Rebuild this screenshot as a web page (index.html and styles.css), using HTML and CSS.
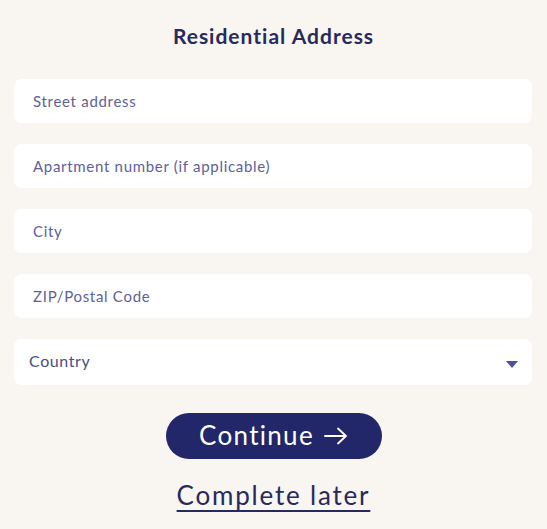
FILE: index.html
```html
<!DOCTYPE html>
<html lang="en">
<head>
<meta charset="utf-8">
<title>Residential Address</title>
<link rel="stylesheet" href="styles.css">
</head>
<body>
<main class="page">
  <h1 class="title">Residential Address</h1>
  <form class="form">
    <div class="field"><span class="placeholder">Street address</span></div>
    <div class="field"><span class="placeholder">Apartment number (if applicable)</span></div>
    <div class="field"><span class="placeholder">City</span></div>
    <div class="field"><span class="placeholder">ZIP/Postal Code</span></div>
    <div class="field select"><span class="select-label">Country</span>
      <svg class="caret" width="14" height="9" viewBox="0 0 14 9"><path d="M1 1 L13 1 L7 8 Z" fill="#4d509a"/></svg>
    </div>
  </form>
  <button class="continue" type="button">Continue
    <svg class="arrow" width="24" height="18" viewBox="0 0 24 18"><path d="M1 9 H22 M14 1.5 L22 9 L14 16.5" fill="none" stroke="#fff" stroke-width="1.8" stroke-linecap="round" stroke-linejoin="round"/></svg>
  </button>
  <a class="later" href="#">Complete later</a>
</main>
</body>
</html>
```
FILE: styles.css
```css
html, body {
  margin: 0;
  padding: 0;
  background: #f9f5f0;
}
body {
  font-family: "Lato", "Noto Sans", sans-serif;
  width: 547px;
  height: 529px;
  overflow: hidden;
}
.page {
  display: flex;
  flex-direction: column;
  align-items: center;
  padding: 22px 14px 0 14px;
}
.title {
  margin: 0;
  font-size: 21px;
  font-weight: 700;
  letter-spacing: 1px;
  color: #272a5c;
  line-height: 28px;
}
.form {
  align-self: stretch;
  display: flex;
  flex-direction: column;
  gap: 21px;
  margin-top: 29px;
  padding-right: 1px;
}
.field {
  height: 44px;
  background: #fff;
  border-radius: 7px;
  display: flex;
  align-items: center;
  padding: 0 19px;
}
.placeholder {
  font-size: 15px;
  letter-spacing: 0.7px;
  color: #5e6199;
}
.select {
  height: 46px;
  padding: 0 13px 4px 15px;
  box-sizing: border-box;
  justify-content: space-between;
}
.select-label {
  font-size: 16px;
  letter-spacing: 0.6px;
  color: #4a4d82;
}
.caret {
  margin-top: 8px;
}
.continue {
  margin-top: 28px;
  width: 216px;
  height: 46px;
  border: none;
  border-radius: 23px;
  background: #222769;
  color: #fff;
  font-family: inherit;
  font-size: 26px;
  letter-spacing: 1.3px;
  display: flex;
  align-items: center;
  justify-content: center;
  gap: 10px;
  padding: 0 0 2px 0;
}
.arrow {
  margin-top: 2px;
}
.later {
  margin-top: 20px;
  font-size: 26px;
  letter-spacing: 1.8px;
  color: #262a5c;
  text-decoration: underline;
  text-decoration-thickness: 1.5px;
  text-underline-offset: 5px;
}
```
